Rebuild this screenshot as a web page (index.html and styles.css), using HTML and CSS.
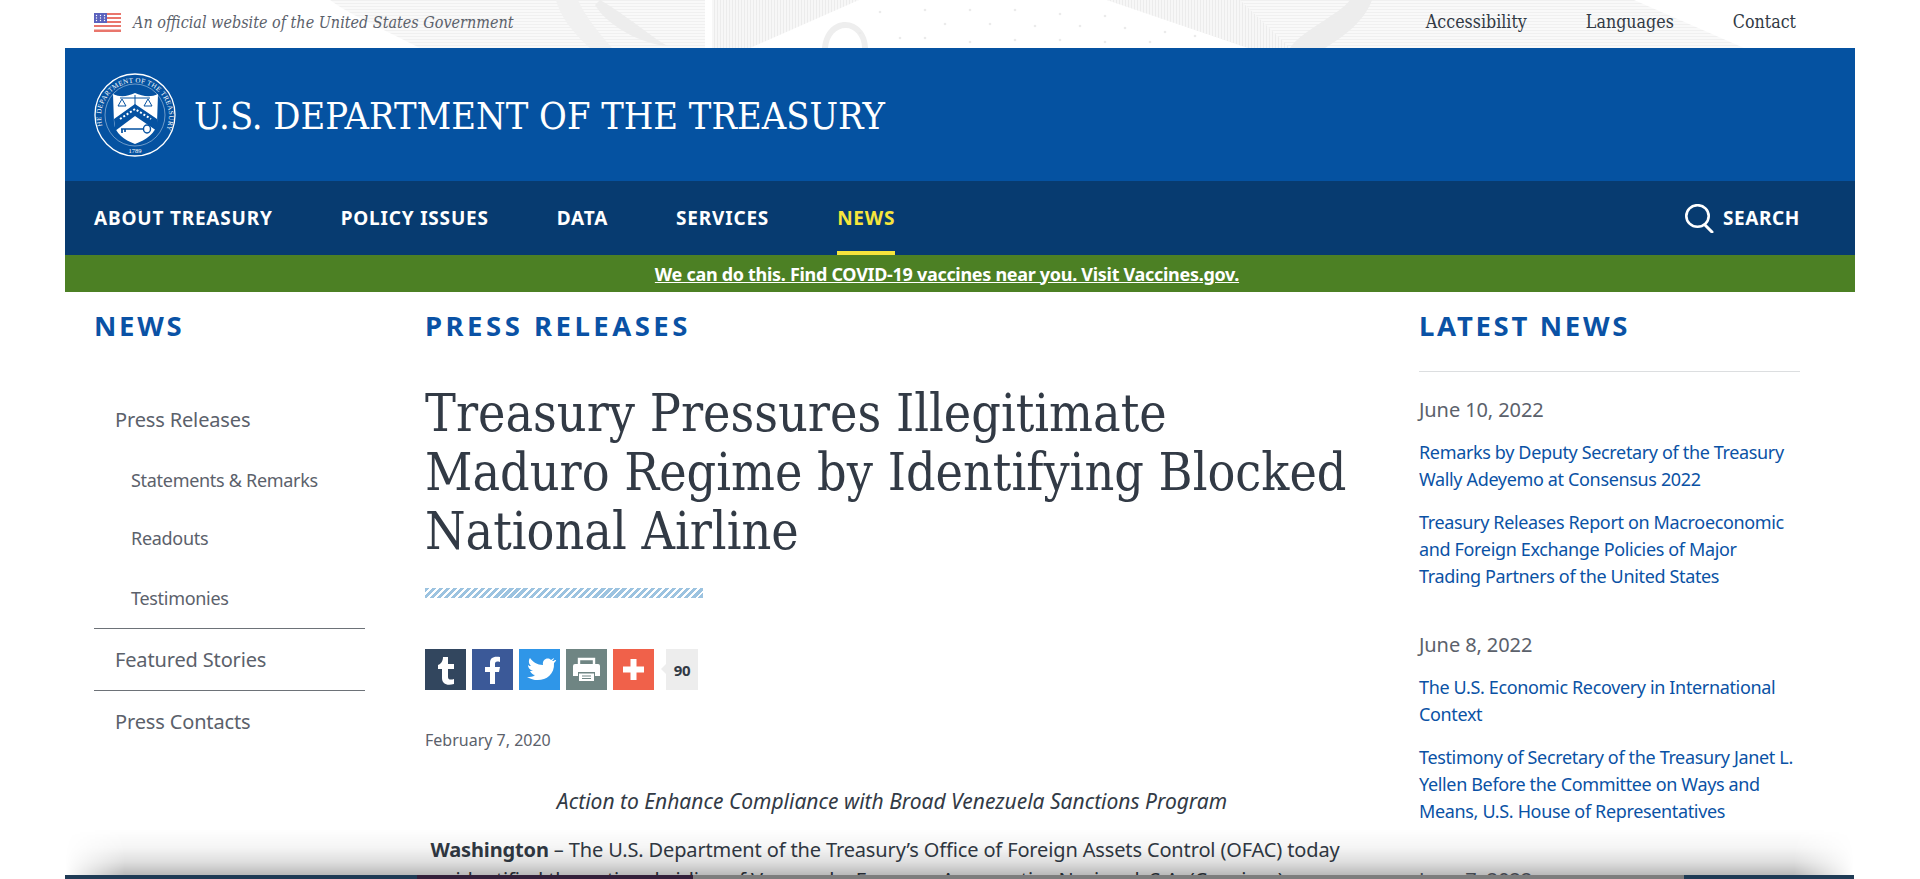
FILE: index.html
```html
<!DOCTYPE html>
<html lang="en">
<head>
<meta charset="utf-8">
<title>Treasury Pressures Illegitimate Maduro Regime</title>
<link rel="stylesheet" href="styles.css">
</head>
<body>
<div class="page">
  <div class="topbar">
    <svg class="engrave" width="1920" height="48" viewBox="0 0 1920 48" aria-hidden="true">
      <defs>
        <pattern id="hatch" width="3" height="3" patternUnits="userSpaceOnUse">
          <rect width="3" height="3" fill="#f7f7f7"/>
          <rect width="1" height="3" fill="#ececec"/>
        </pattern>
        <pattern id="hatch2" width="4" height="3" patternUnits="userSpaceOnUse">
          <rect width="4" height="3" fill="#f9f9f9"/>
          <rect width="4" height="1" fill="#f0f0f0"/>
        </pattern>
      </defs>
      <path d="M330 0 H705 V48 H420 C385 30 350 15 330 0Z" fill="url(#hatch2)"/>
      <path d="M712 0 H859 L750 48 H712Z" fill="url(#hatch)"/>
      <path d="M1107 0 H1634 L1744 48 H1248Z" fill="url(#hatch2)"/>
      <path d="M1107 0 H1240 L1290 48 H1248Z" fill="url(#hatch)"/>
      <path d="M600 0 C625 14 655 40 668 46 C650 46 610 30 595 5Z" fill="#ededed"/>
      <path d="M590 48 C570 30 560 15 556 0 H578 C586 18 600 34 612 48Z" fill="#f1f1f1"/>
      <path d="M1350 0 C1340 14 1300 32 1290 48 H1325 C1345 36 1365 20 1372 0Z" fill="#ededed"/>
      <path d="M822 48 C824 30 835 22 845 22 C858 22 868 34 868 48 H862 C862 36 854 28 846 28 C836 28 829 36 828 48Z" fill="#eeeeee"/>
      <g fill="#ebebeb">
        <circle cx="880" cy="12" r="1.300"/><circle cx="925" cy="10" r="1.300"/><circle cx="970" cy="10" r="1.300"/><circle cx="1015" cy="10" r="1.300"/><circle cx="1060" cy="14" r="1.300"/><circle cx="1105" cy="16" r="1.300"/>
        <circle cx="860" cy="33" r="1.300"/><circle cx="900" cy="38" r="1.300"/><circle cx="945" cy="24" r="1.300"/><circle cx="990" cy="24" r="1.300"/><circle cx="1035" cy="26" r="1.300"/><circle cx="1080" cy="26" r="1.300"/><circle cx="1125" cy="28" r="1.300"/><circle cx="1165" cy="32" r="1.300"/>
        <circle cx="925" cy="38" r="1.300"/><circle cx="970" cy="42" r="1.300"/><circle cx="1015" cy="40" r="1.300"/><circle cx="1060" cy="40" r="1.300"/><circle cx="1105" cy="42" r="1.300"/><circle cx="1150" cy="42" r="1.300"/><circle cx="1195" cy="36" r="1.300"/>
      </g>
    </svg>
    <div class="official">
      <svg class="flag" viewBox="0 0 27 19" aria-hidden="true">
        <rect width="27" height="19" fill="#fff"/>
        <g fill="#e9766c"><rect y="0" width="27" height="2"/><rect y="4" width="27" height="2"/><rect y="8" width="27" height="2"/><rect y="12" width="27" height="2"/><rect y="16.500" width="27" height="2.500"/></g>
        <rect width="13" height="10" fill="#5b62bd"/>
        <g fill="#fff"><circle cx="2.500" cy="2.500" r=".7"/><circle cx="6.500" cy="2.500" r=".7"/><circle cx="10.500" cy="2.500" r=".7"/><circle cx="2.500" cy="5" r=".7"/><circle cx="6.500" cy="5" r=".7"/><circle cx="10.500" cy="5" r=".7"/><circle cx="2.500" cy="7.500" r=".7"/><circle cx="6.500" cy="7.500" r=".7"/><circle cx="10.500" cy="7.500" r=".7"/></g>
      </svg>
      <em>An official website of the United States Government</em>
    </div>
    <nav class="toplinks"><a>Accessibility</a><a>Languages</a><a>Contact</a></nav>
  </div>

  <div class="shell">
    <header class="brand">
      <svg class="seal" viewBox="0 0 82 84" aria-hidden="true">
        <defs>
          <path id="sealtop" d="M9 55 A34 34 0 1 1 73 55"/>
        </defs>
        <ellipse cx="41" cy="42" rx="40" ry="41" fill="none" stroke="#fff" stroke-width="1.300"/>
        <ellipse cx="41" cy="42" rx="30" ry="31" fill="none" stroke="#fff" stroke-width=".6" opacity=".7"/>
        <text class="sealtext"><textPath href="#sealtop" startOffset="50%" text-anchor="middle">THE DEPARTMENT OF THE TREASURY</textPath></text>
        <text class="sealyear" x="41" y="80" text-anchor="middle">1789</text>
        <path d="M19 21 C27 25 34 23 41 20 C48 23 56 25 64 21 L63 50 C62 60 52 67 41 71 C30 67 21 60 20 50Z" fill="#fff"/>
        <path d="M20 46 L41 31 L63 46 L63 58 L41 43 L21 58Z" fill="#0552a1"/>
        <path d="M26 46 L41 36 L57 46" fill="none" stroke="#fff" stroke-width="2" stroke-dasharray="2 2"/>
        <path d="M26 25 H56 M41 22 V33 M28 26 L24 33 H32Z M54 26 L50 33 H58Z" stroke="#0552a1" stroke-width="1" fill="none"/>
        <path d="M27 56 H50 M28 56 V60 M31 56 V59" stroke="#0552a1" stroke-width="1.700" fill="none"/>
        <ellipse cx="53" cy="56" rx="3.500" ry="4" fill="none" stroke="#0552a1" stroke-width="1.400"/>
      </svg>
      <span class="agency">U.S. DEPARTMENT OF THE TREASURY</span>
    </header>
    <nav class="mainnav">
      <a>ABOUT TREASURY</a>
      <a>POLICY ISSUES</a>
      <a>DATA</a>
      <a>SERVICES</a>
      <a class="current">NEWS</a>
      <a class="search">
        <svg viewBox="0 0 29 29" aria-hidden="true"><ellipse cx="12.500" cy="12" rx="11.200" ry="10.800" fill="none" stroke="#fff" stroke-width="2.600"/><path d="M20 21 L27 28" stroke="#fff" stroke-width="3" stroke-linecap="round"/></svg>
        SEARCH
      </a>
    </nav>
    <div class="alert"><a>We can do this. Find COVID-19 vaccines near you. Visit Vaccines.gov.</a></div>

    <div class="columns">
      <aside class="side">
        <h2 class="kicker">NEWS</h2>
        <ul class="sidenav">
          <li class="l1 first">Press Releases</li>
          <li class="l2">Statements &amp; Remarks</li>
          <li class="l2">Readouts</li>
          <li class="l2 last">Testimonies</li>
          <li class="l1 rule">Featured Stories</li>
          <li class="l1 rule">Press Contacts</li>
        </ul>
      </aside>
      <main class="article">
        <h2 class="kicker">PRESS RELEASES</h2>
        <h1>Treasury Pressures Illegitimate Maduro Regime by Identifying Blocked National Airline</h1>
        <div class="stripe"></div>
        <div class="share">
          <span class="sb tumblr"><svg viewBox="0 0 41 41" aria-hidden="true"><path d="M18 8h5v7h6v5h-6v8c0 3 3 3 6 2v5c-7 2-12 0-12-6v-9h-4v-4c3-1 5-4 5-8z" fill="#fff"/></svg></span>
          <span class="sb fb"><svg viewBox="0 0 41 41" aria-hidden="true"><path d="M18 35V23h-5v-5h5v-4c0-5 3-7 10-6v5c-4-1-5 0-5 2v3h5l-1 5h-4v12z" fill="#fff"/></svg></span>
          <span class="sb tw"><svg viewBox="0 0 41 41" aria-hidden="true"><path d="M36 11c-1 1-2 1-3 1 1-1 2-2 2-3-1 1-2 1-3 2-3-3-9-1-8 5-6 0-10-3-13-7-2 3-1 6 1 8-1 0-2 0-3-1 0 3 2 5 5 6h-3c1 2 3 4 5 4-2 2-5 2-8 2 11 7 28 2 27-14 1-1 2-2 2-3z" fill="#fff"/></svg></span>
          <span class="sb pr"><svg viewBox="0 0 41 41" aria-hidden="true"><path d="M13 15V10h15v5" fill="none" stroke="#fff" stroke-width="2.400"/><path d="M9 15h23a2 2 0 0 1 2 2v10h-5v-4H12v4H7V17a2 2 0 0 1 2-2z" fill="#fff"/><path d="M13 24.500h15V32H13z" fill="#fff"/><path d="M16 27h9M16 29.500h9" stroke="#6f8583" stroke-width="1"/></svg></span>
          <span class="sb plus"><svg viewBox="0 0 41 41" aria-hidden="true"><path d="M17.500 10h6v7.500H31v6h-7.500V31h-6v-7.500H10v-6h7.500z" fill="#fff"/></svg></span>
          <span class="count">90</span>
        </div>
        <p class="date">February 7, 2020</p>
        <p class="sub">Action to Enhance Compliance with Broad Venezuela Sanctions Program</p>
        <p class="body"><strong>Washington</strong> – The U.S. Department of the Treasury’s Office of Foreign Assets Control (OFAC) today identified the national airline of Venezuela, Empresa Aeronautica Nacional, S.A. (Conviasa), as blocked</p>
      </main>
      <aside class="latest">
        <h2 class="kicker">LATEST NEWS</h2>
        <div class="newsgroup first">
          <p class="newsdate">June 10, 2022</p>
          <a>Remarks by Deputy Secretary of the Treasury Wally Adeyemo at Consensus 2022</a>
          <a>Treasury Releases Report on Macroeconomic and Foreign Exchange Policies of Major Trading Partners of the United States</a>
        </div>
        <div class="newsgroup">
          <p class="newsdate">June 8, 2022</p>
          <a>The U.S. Economic Recovery in International Context</a>
          <a>Testimony of Secretary of the Treasury Janet L. Yellen Before the Committee on Ways and Means, U.S. House of Representatives</a>
        </div>
        <div class="newsgroup">
          <p class="newsdate">June 7, 2022</p>
        </div>
      </aside>
    </div>
  </div>

  <div class="fade" aria-hidden="true"></div>
  <div class="strip" aria-hidden="true"><i class="s1"></i><i class="s2"></i><i class="s3"></i><i class="s4"></i></div>
</div>
</body>
</html>
```
FILE: styles.css
```css
* { box-sizing: border-box; }
html, body { margin: 0; height: 100%; background: #fff; overflow: hidden; }
body { font-family: "Noto Sans", "Open Sans", sans-serif; color: #323a45; }
a { color: inherit; text-decoration: none; }
h1, h2, p, ul { margin: 0; padding: 0; }
ul { list-style: none; }

.page { position: relative; width: 1920px; height: 879px; overflow: hidden; }

.topbar { position: relative; height: 48px; display: flex; align-items: center; justify-content: space-between; padding: 0 124px 4px 94px; font-family: "DejaVu Serif Condensed", "Liberation Serif", serif; }
.engrave { position: absolute; left: 0; top: 0; }
.official, .toplinks { position: relative; display: flex; align-items: center; }
.official { gap: 12px; font-size: 16px; color: #5b616b; }
.flag { width: 27px; height: 19px; }
.toplinks { gap: 59px; font-size: 17.700px; color: #323a45; }

.shell { margin: 0 65px; width: 1790px; }
.brand { height: 133px; background: #0552a1; display: flex; align-items: center; padding: 3px 0 0 29px; gap: 18px; }
.seal { width: 82px; height: 84px; margin-top: -3px; }
.sealtext { font-family: "Liberation Serif", serif; font-size: 7px; fill: #fff; letter-spacing: .3px; }
.sealyear { font-family: "Liberation Serif", serif; font-size: 6.500px; fill: #fff; }
.agency { font-family: "DejaVu Serif Condensed", "Liberation Serif", serif; font-size: 37.700px; color: #fff; }

.mainnav { height: 74px; background: #073b70; display: flex; padding: 0 55px 0 29px; gap: 68px; align-items: stretch; }
.mainnav a { display: flex; align-items: center; color: #fff; font-size: 19px; font-weight: 700; letter-spacing: .8px; }
.mainnav .current { color: #f6e53c; border-bottom: 4px solid #f6e53c; padding-top: 4px; }
.mainnav .search { margin-left: auto; gap: 9px; letter-spacing: .6px; }
.search svg { width: 29px; height: 29px; }

.alert { height: 37px; background: #4c8024; display: flex; align-items: center; justify-content: center; padding-right: 26px; color: #fff; font-size: 18px; font-weight: 700; letter-spacing: -.3px; }
.alert a { text-decoration: underline; }

.columns { display: grid; grid-template-columns: 271px 934px 381px; column-gap: 60px; padding: 0 0 0 29px; }
.kicker { font-size: 27.500px; line-height: 34px; font-weight: 700; letter-spacing: 2.700px; color: #0a52a5; margin-top: 17px; }
.article .kicker { letter-spacing: 3.500px; }

.sidenav { margin-top: 44px; color: #5b616b; }
.l1 { font-size: 20px; letter-spacing: -.15px; padding-left: 21px; height: 62px; display: flex; align-items: center; }
.l1.first { height: 64px; }
.l2 { font-size: 18px; letter-spacing: -.3px; padding-left: 37px; height: 58px; display: flex; align-items: center; }
.l2.last { height: 61px; }
.rule { border-top: 1px solid #6d7278; }

.article { min-width: 0; }
h1 { font-family: "DejaVu Serif Condensed", "Liberation Serif", serif; font-weight: 400; font-size: 51.500px; line-height: 59px; color: #323a45; margin-top: 41px; }
.stripe { width: 278px; height: 10px; margin-top: 27px; background: repeating-linear-gradient(135deg, #9cc3e0 0 3px, #fff 3px 5px); }
.share { display: flex; gap: 6px; margin-top: 51px; align-items: stretch; height: 41px; }
.sb { width: 41px; height: 41px; display: block; }
.sb svg { display: block; width: 41px; height: 41px; }
.tumblr { background: #32465e; }
.fb { background: #3b5998; }
.tw { background: #2f96e8; }
.pr { background: #6f8583; }
.plus { background: #f0614a; }
.count { position: relative; width: 32px; margin-left: 6px; background: #ededed; color: #323a45; font-size: 15px; font-weight: 700; letter-spacing: -.3px; display: flex; align-items: center; justify-content: center; }
.count::before { content: ""; position: absolute; left: -5px; top: 15px; border: 5px solid transparent; border-left: 0; border-right-color: #ededed; }
.date { margin-top: 39px; font-size: 16px; line-height: 22px; color: #5b616b; }
.sub { margin-top: 36px; font-style: italic; font-size: 21px; line-height: 28px; text-align: center; }
.body { margin-top: 20px; padding-right: 14px; font-size: 20px; letter-spacing: -.14px; line-height: 30px; text-align: center; }

.latest .kicker { margin-bottom: 28px; }
.newsgroup { margin-top: 43px; }
.newsgroup.first { border-top: 1px solid #dcdee0; margin-top: 0; padding-top: 26px; }
.newsdate { font-size: 20px; line-height: 24px; color: #5b616b; margin-bottom: 17px; letter-spacing: -.1px; }
.newsgroup a { display: block; font-size: 18px; letter-spacing: -.35px; line-height: 27px; color: #0a52a5; margin-bottom: 16px; }

.fade { position: absolute; left: 65px; right: 66px; bottom: 4px; height: 46px; background: linear-gradient(to bottom, rgba(0,0,0,0), rgba(0,0,0,.04) 40%, rgba(0,0,0,.13) 72%, rgba(0,0,0,.27)); -webkit-mask-image: linear-gradient(to right, transparent, #000 60px, #000 calc(100% - 60px), transparent); mask-image: linear-gradient(to right, transparent, #000 60px, #000 calc(100% - 60px), transparent); }
.strip { position: absolute; left: 65px; right: 66px; bottom: 0; height: 4px; display: flex; }
.strip i { display: block; height: 100%; }
.s1 { width: 352px; background: #1f3b55; }
.s2 { width: 276px; background: #33203a; }
.s3 { width: 991px; background: #7d7d7d; }
.s4 { flex: 1; background: #1f3b55; }
```
